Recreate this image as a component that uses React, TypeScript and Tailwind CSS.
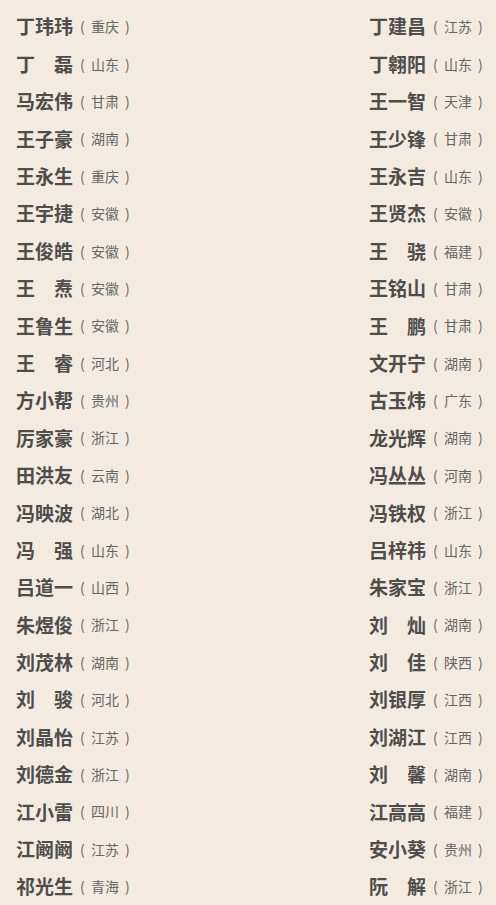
const left: [string, string][] = [
  ["丁玮玮", "重庆"],
  ["丁　磊", "山东"],
  ["马宏伟", "甘肃"],
  ["王子豪", "湖南"],
  ["王永生", "重庆"],
  ["王宇捷", "安徽"],
  ["王俊皓", "安徽"],
  ["王　焘", "安徽"],
  ["王鲁生", "安徽"],
  ["王　睿", "河北"],
  ["方小帮", "贵州"],
  ["厉家豪", "浙江"],
  ["田洪友", "云南"],
  ["冯映波", "湖北"],
  ["冯　强", "山东"],
  ["吕道一", "山西"],
  ["朱煜俊", "浙江"],
  ["刘茂林", "湖南"],
  ["刘　骏", "河北"],
  ["刘晶怡", "江苏"],
  ["刘德金", "浙江"],
  ["江小雷", "四川"],
  ["江阚阚", "江苏"],
  ["祁光生", "青海"],
];

const right: [string, string][] = [
  ["丁建昌", "江苏"],
  ["丁翱阳", "山东"],
  ["王一智", "天津"],
  ["王少锋", "甘肃"],
  ["王永吉", "山东"],
  ["王贤杰", "安徽"],
  ["王　骁", "福建"],
  ["王铭山", "甘肃"],
  ["王　鹏", "甘肃"],
  ["文开宁", "湖南"],
  ["古玉炜", "广东"],
  ["龙光辉", "湖南"],
  ["冯丛丛", "河南"],
  ["冯铁权", "浙江"],
  ["吕梓祎", "山东"],
  ["朱家宝", "浙江"],
  ["刘　灿", "湖南"],
  ["刘　佳", "陕西"],
  ["刘银厚", "江西"],
  ["刘湖江", "江西"],
  ["刘　馨", "湖南"],
  ["江高高", "福建"],
  ["安小葵", "贵州"],
  ["阮　解", "浙江"],
];

function Person({ name, place }: { name: string; place: string }) {
  return (
    <div className="flex h-[37.4px] items-center whitespace-nowrap">
      <span className="text-[19px] font-bold text-[#4d4d4d]">{name}</span>
      <span className="ml-[7px] text-[14px] text-[#666]">
        ( <span className="mx-[3px]">{place}</span> )
      </span>
    </div>
  );
}

export default function App() {
  return (
    <div
      className="min-h-[905px] w-[496px] bg-[#f3ebe0] pt-[8px]"
      style={{ fontFamily: '"Noto Sans CJK SC", "Noto Sans", sans-serif' }}
    >
      <div className="grid grid-cols-[353px_1fr] pl-4">
        <div>
          {left.map(([n, p]) => (
            <Person key={n} name={n} place={p} />
          ))}
        </div>
        <div>
          {right.map(([n, p]) => (
            <Person key={n} name={n} place={p} />
          ))}
        </div>
      </div>
    </div>
  );
}
